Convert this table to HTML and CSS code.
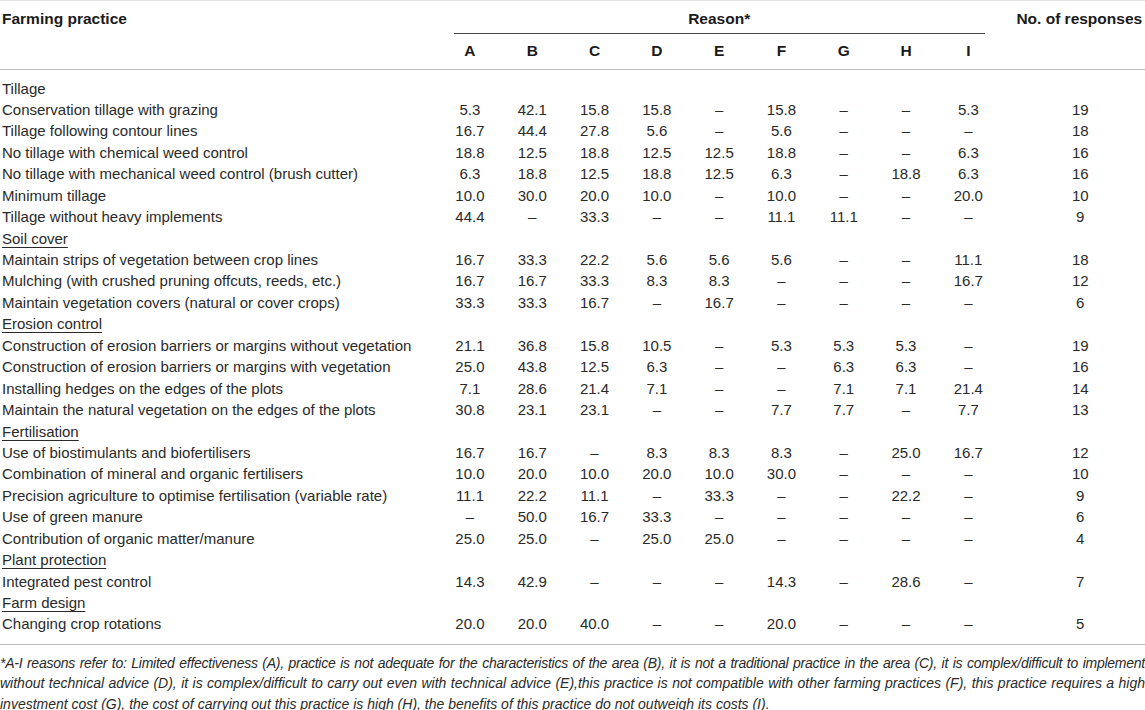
FILE: index.html
```html
<!DOCTYPE html>
<html>
<head>
<meta charset="utf-8">
<link rel="stylesheet" href="styles.css">
</head>
<body>
<table class="tbl">
<colgroup>
<col class="c-name"><col class="c-val"><col class="c-val"><col class="c-val"><col class="c-val"><col class="c-val"><col class="c-val"><col class="c-val"><col class="c-val"><col class="c-val"><col class="c-resp">
</colgroup>
<thead>
<tr class="h1">
<th class="name" rowspan="2">Farming practice</th>
<th class="reason" colspan="9"><div class="reason-line">Reason*</div></th>
<th class="resp" rowspan="2">No. of responses</th>
</tr>
<tr class="h2">
<th>A</th><th>B</th><th>C</th><th>D</th><th>E</th><th>F</th><th>G</th><th>H</th><th>I</th>
</tr>
</thead>
<tbody>
<tr class="first"><td class="name">Tillage</td><td colspan="10"></td></tr>
<tr><td class="name">Conservation tillage with grazing</td><td>5.3</td><td>42.1</td><td>15.8</td><td>15.8</td><td>–</td><td>15.8</td><td>–</td><td>–</td><td>5.3</td><td class="resp">19</td></tr>
<tr><td class="name">Tillage following contour lines</td><td>16.7</td><td>44.4</td><td>27.8</td><td>5.6</td><td>–</td><td>5.6</td><td>–</td><td>–</td><td>–</td><td class="resp">18</td></tr>
<tr><td class="name">No tillage with chemical weed control</td><td>18.8</td><td>12.5</td><td>18.8</td><td>12.5</td><td>12.5</td><td>18.8</td><td>–</td><td>–</td><td>6.3</td><td class="resp">16</td></tr>
<tr><td class="name">No tillage with mechanical weed control (brush cutter)</td><td>6.3</td><td>18.8</td><td>12.5</td><td>18.8</td><td>12.5</td><td>6.3</td><td>–</td><td>18.8</td><td>6.3</td><td class="resp">16</td></tr>
<tr><td class="name">Minimum tillage</td><td>10.0</td><td>30.0</td><td>20.0</td><td>10.0</td><td>–</td><td>10.0</td><td>–</td><td>–</td><td>20.0</td><td class="resp">10</td></tr>
<tr><td class="name">Tillage without heavy implements</td><td>44.4</td><td>–</td><td>33.3</td><td>–</td><td>–</td><td>11.1</td><td>11.1</td><td>–</td><td>–</td><td class="resp">9</td></tr>
<tr><td class="name"><span class="sec">Soil cover</span></td><td colspan="10"></td></tr>
<tr><td class="name">Maintain strips of vegetation between crop lines</td><td>16.7</td><td>33.3</td><td>22.2</td><td>5.6</td><td>5.6</td><td>5.6</td><td>–</td><td>–</td><td>11.1</td><td class="resp">18</td></tr>
<tr><td class="name">Mulching (with crushed pruning offcuts, reeds, etc.)</td><td>16.7</td><td>16.7</td><td>33.3</td><td>8.3</td><td>8.3</td><td>–</td><td>–</td><td>–</td><td>16.7</td><td class="resp">12</td></tr>
<tr><td class="name">Maintain vegetation covers (natural or cover crops)</td><td>33.3</td><td>33.3</td><td>16.7</td><td>–</td><td>16.7</td><td>–</td><td>–</td><td>–</td><td>–</td><td class="resp">6</td></tr>
<tr><td class="name"><span class="sec">Erosion control</span></td><td colspan="10"></td></tr>
<tr><td class="name">Construction of erosion barriers or margins without vegetation</td><td>21.1</td><td>36.8</td><td>15.8</td><td>10.5</td><td>–</td><td>5.3</td><td>5.3</td><td>5.3</td><td>–</td><td class="resp">19</td></tr>
<tr><td class="name">Construction of erosion barriers or margins with vegetation</td><td>25.0</td><td>43.8</td><td>12.5</td><td>6.3</td><td>–</td><td>–</td><td>6.3</td><td>6.3</td><td>–</td><td class="resp">16</td></tr>
<tr><td class="name">Installing hedges on the edges of the plots</td><td>7.1</td><td>28.6</td><td>21.4</td><td>7.1</td><td>–</td><td>–</td><td>7.1</td><td>7.1</td><td>21.4</td><td class="resp">14</td></tr>
<tr><td class="name">Maintain the natural vegetation on the edges of the plots</td><td>30.8</td><td>23.1</td><td>23.1</td><td>–</td><td>–</td><td>7.7</td><td>7.7</td><td>–</td><td>7.7</td><td class="resp">13</td></tr>
<tr><td class="name"><span class="sec">Fertilisation</span></td><td colspan="10"></td></tr>
<tr><td class="name">Use of biostimulants and biofertilisers</td><td>16.7</td><td>16.7</td><td>–</td><td>8.3</td><td>8.3</td><td>8.3</td><td>–</td><td>25.0</td><td>16.7</td><td class="resp">12</td></tr>
<tr><td class="name">Combination of mineral and organic fertilisers</td><td>10.0</td><td>20.0</td><td>10.0</td><td>20.0</td><td>10.0</td><td>30.0</td><td>–</td><td>–</td><td>–</td><td class="resp">10</td></tr>
<tr><td class="name">Precision agriculture to optimise fertilisation (variable rate)</td><td>11.1</td><td>22.2</td><td>11.1</td><td>–</td><td>33.3</td><td>–</td><td>–</td><td>22.2</td><td>–</td><td class="resp">9</td></tr>
<tr><td class="name">Use of green manure</td><td>–</td><td>50.0</td><td>16.7</td><td>33.3</td><td>–</td><td>–</td><td>–</td><td>–</td><td>–</td><td class="resp">6</td></tr>
<tr><td class="name">Contribution of organic matter/manure</td><td>25.0</td><td>25.0</td><td>–</td><td>25.0</td><td>25.0</td><td>–</td><td>–</td><td>–</td><td>–</td><td class="resp">4</td></tr>
<tr><td class="name"><span class="sec">Plant protection</span></td><td colspan="10"></td></tr>
<tr><td class="name">Integrated pest control</td><td>14.3</td><td>42.9</td><td>–</td><td>–</td><td>–</td><td>14.3</td><td>–</td><td>28.6</td><td>–</td><td class="resp">7</td></tr>
<tr><td class="name"><span class="sec">Farm design</span></td><td colspan="10"></td></tr>
<tr class="last"><td class="name">Changing crop rotations</td><td>20.0</td><td>20.0</td><td>40.0</td><td>–</td><td>–</td><td>20.0</td><td>–</td><td>–</td><td>–</td><td class="resp">5</td></tr>
</tbody>
</table>
<div class="note">
<span class="nl tight">*A-I reasons refer to: Limited effectiveness (A), practice is not adequate for the characteristics of the area (B), it is not a traditional practice in the area (C), it is complex/difficult to implement</span>
<span class="nl">without technical advice (D), it is complex/difficult to carry out even with technical advice (E),this practice is not compatible with other farming practices (F), this practice requires a high</span>
<span class="nl last">investment cost (G), the cost of carrying out this practice is high (H), the benefits of this practice do not outweigh its costs (I).</span>
</div>
</body>
</html>
```

FILE: styles.css
```css
html, body {
  margin: 0;
  padding: 0;
  background: #fff;
}
body {
  font-family: "Liberation Sans", Arial, sans-serif;
  color: #2a2a2a;
  width: 1145px;
  overflow: hidden;
}
.tbl {
  width: 1145px;
  border-collapse: collapse;
  table-layout: fixed;
  border-top: 1px solid #e4e4e4;
  font-size: 15px;
}
.c-name { width: 438.8px; }
.c-val { width: 62.3px; }
.c-resp { width: auto; }
th, td {
  padding: 0;
  text-align: center;
  vertical-align: top;
}
th {
  font-weight: bold;
  font-size: 15.5px;
  color: #1a1a1a;
  line-height: 16px;
}
.h1 th {
  height: 32px;
  padding-top: 10px;
  box-sizing: border-box;
}
.h1 th.name, .h1 th.resp {
  border-bottom: 1px solid #bdbdbd;
}
.h1 th.resp {
  padding-left: 14px;
  white-space: nowrap;
}
th.name, td.name {
  text-align: left;
  padding-left: 2px;
}
.reason {
  padding-left: 15px !important;
  padding-right: 15px !important;
}
.reason-line {
  border-bottom: 1.5px solid #444;
  height: 22px;
}
.h2 th {
  height: 35px;
  padding-top: 9px;
  box-sizing: border-box;
  border-bottom: 1px solid #bdbdbd;
}
tbody td {
  height: 21.44px;
  line-height: 21.44px;
  white-space: nowrap;
}
td.resp {
  padding-left: 16px;
}
tr.first td {
  padding-top: 8px;
}
tr.last td {
  padding-bottom: 9px;
  border-bottom: 1px solid #bdbdbd;
}
.sec {
  text-decoration: underline;
  text-underline-offset: 3px;
  text-decoration-thickness: 1px;
}
.note {
  font-style: italic;
  font-size: 14px;
  line-height: 20.5px;
  padding-top: 8px;
  color: #2a2a2a;
}
.nl {
  display: block;
  text-align: justify;
  text-align-last: justify;
  white-space: nowrap;
}
.nl.tight {
  letter-spacing: -0.25px;
}
.nl.last {
  text-align-last: left;
}
```
